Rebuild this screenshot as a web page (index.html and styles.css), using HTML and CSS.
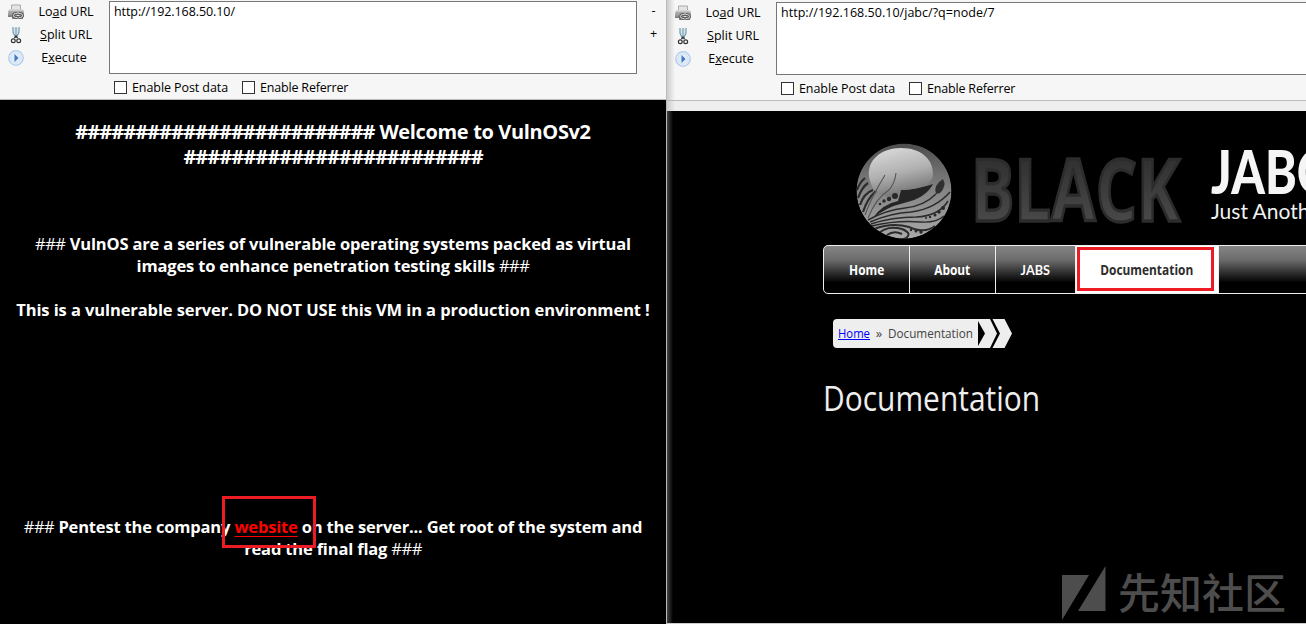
FILE: index.html
```
<!DOCTYPE html>
<html lang="en">
<head>
<meta charset="utf-8">
<title>VulnOSv2</title>
<link rel="stylesheet" href="styles.css">
</head>
<body>
<svg class="defs" width="0" height="0">
  <defs>
    <linearGradient id="print" x1="0" y1="0" x2="0" y2="1"><stop offset="0" stop-color="#ddd"/><stop offset="1" stop-color="#777"/></linearGradient>
    <symbol id="i-load" viewBox="0 0 16 16">
      <path d="M3.500 1h9v5h-9z" fill="#e4e4e4" stroke="#aaa"/>
      <path d="M1.500 5h13l1.500 2v6H0V7z" fill="url(#print)"/>
      <path d="M1 8h14" stroke="#999"/>
      <path d="M4 11.500h11v3.500H4z" fill="#888"/>
      <path d="M9 9.500H7.500a2 2 0 0 0 0 4H9M11 9.500h1.500a2 2 0 0 1 0 4H11M8.500 11.500h3" fill="none" stroke="#555" stroke-width="2.400"/>
      <path d="M9 9.500H7.500a2 2 0 0 0 0 4H9M11 9.500h1.500a2 2 0 0 1 0 4H11M8.500 11.500h3" fill="none" stroke="#ddd" stroke-width="1"/>
    </symbol>
    <symbol id="i-split" viewBox="0 0 12 18">
      <path d="M3 1v5l2.500 5.500M9 1v5l-2.500 5.500M6 1v9" fill="none" stroke="#6c9aae" stroke-width="1.200"/>
      <path d="M4.500 2v5M7.500 2v5" stroke="#cfe0e6"/>
      <path d="M4.500 12 6 10l1.500 2" fill="none" stroke="#333" stroke-width="1.300"/>
      <circle cx="3.300" cy="14.700" r="1.900" fill="none" stroke="#333" stroke-width="1.200"/>
      <circle cx="8.700" cy="14.700" r="1.900" fill="none" stroke="#333" stroke-width="1.200"/>
    </symbol>
    <symbol id="i-run" viewBox="0 0 16 16">
      <circle cx="8" cy="8" r="7.200" fill="#f4f8fd" stroke="#b5cfec" stroke-width="1.500"/>
      <circle cx="8" cy="8" r="5.300" fill="#e2ecf8" stroke="#d0e0f2"/>
      <path d="M6.500 4 10.500 8l-4 4z" fill="#3d78c0"/>
    </symbol>
  </defs>
</svg>

<section class="pane left">
  <header class="toolbar">
    <div class="actions">
      <svg class="ic"><use href="#i-load"/></svg><span>Lo<u>a</u>d URL</span>
      <svg class="ic cut"><use href="#i-split"/></svg><span><u>S</u>plit URL</span>
      <svg class="ic"><use href="#i-run"/></svg><span class="exec">E<u>x</u>ecute</span>
    </div>
    <div class="entry">
      <div class="url">http://192.168.50.10/</div>
      <div class="checks"><i class="box"></i><span class="post">Enable Post data</span><i class="box"></i><span class="ref">Enable Referrer</span></div>
    </div>
    <div class="size"><span>-</span><span>+</span></div>
  </header>
  <main class="vuln">
    <h1><span class="hashes">#########################</span> Welcome to VulnOSv2<br><span class="hashes">#########################</span></h1>
    <p class="p1"><em>###</em> VulnOS are a series of vulnerable operating systems packed as virtual<br>images to enhance penetration testing skills <em>###</em></p>
    <p class="p2">This is a vulnerable server. DO NOT USE this VM in a production environment !</p>
    <p class="p3"><em>###</em> Pentest the company <a>website</a> on the server... Get root of the system and<br>read the final flag <em>###</em></p>
    <div class="mark"></div>
  </main>
</section>

<section class="pane right">
  <header class="toolbar">
    <div class="actions">
      <svg class="ic"><use href="#i-load"/></svg><span>Lo<u>a</u>d URL</span>
      <svg class="ic cut"><use href="#i-split"/></svg><span><u>S</u>plit URL</span>
      <svg class="ic"><use href="#i-run"/></svg><span class="exec">E<u>x</u>ecute</span>
    </div>
    <div class="entry">
      <div class="url wide">http://192.168.50.10/jabc/?q=node/7</div>
      <div class="checks"><i class="box"></i><span class="post">Enable Post data</span><i class="box"></i><span class="ref">Enable Referrer</span></div>
    </div>
  </header>
  <div class="strip"></div>
  <main class="jabc">
    <div class="brand">
      <svg class="orb" viewBox="0 0 96 96">
        <defs>
          <linearGradient id="ball" x1="0" y1="0" x2="0" y2="1"><stop offset="0" stop-color="#4c4c4c"/><stop offset=".5" stop-color="#858585"/><stop offset="1" stop-color="#a8a8a8"/></linearGradient>
          <linearGradient id="shine" x1=".3" y1="0" x2=".6" y2="1"><stop offset="0" stop-color="#d8d8d8"/><stop offset=".5" stop-color="#b0b0b0"/><stop offset="1" stop-color="#6a6a6a"/></linearGradient>
          <clipPath id="round"><circle cx="48" cy="48" r="47.500"/></clipPath>
        </defs>
        <g clip-path="url(#round)">
          <circle cx="48" cy="48" r="47.500" fill="url(#ball)"/>
          <path d="M42 58 45 47Q63 46 77 41 70 55 48 60 30 64 16 76 26 61 42 58Z" fill="#252525"/>
          <path d="M13 34C11 17 25 5 45 5S77 16 77 31C77 42 63 47 44 47L41 55Q28 55 18 47 14 41 13 34Z" fill="url(#shine)"/>
          <g fill="none" stroke="#2b2b2b">
            <path d="M1 47Q4 39 9 35M2 55Q6 44 12 40M4 62Q8 50 17 47M7 69Q11 56 20 48" stroke-width="2.200"/>
            <path d="M9 72Q15 55 29 32M12 75Q20 55 33 47 39 40 40 30" stroke-width="1.100" stroke="#555"/>
            <path d="M12 77Q30 67 49 65T80 51M14 79Q35 70 55 69 79 66 94 49M15 81Q36 74 60 74 83 73 92 58M16 83Q40 77 65 79 80 80 88 73" stroke-width="1.500"/>
            <path d="M18 86Q36 79 53 84 69 91 79 83M22 91Q31 82 46 86 58 91 48 96M31 92Q38 87 46 91" stroke-width="2"/>
          </g>
          <path d="M80 51Q77 42 87 36 91 43 84 50Z" fill="#303030"/>
          <g fill="#282828"><circle cx="39" cy="53" r="3"/><circle cx="33" cy="56" r="2.200"/><circle cx="28" cy="58" r="1.700"/><circle cx="24" cy="61" r="1.300"/><circle cx="87" cy="65" r="2"/><circle cx="83" cy="69" r="1.700"/><circle cx="79" cy="72" r="1.500"/><circle cx="74" cy="74" r="1.200"/><circle cx="70" cy="75" r="1"/><circle cx="65" cy="89" r="1.700"/><circle cx="60" cy="88" r="1.500"/><circle cx="55" cy="87" r="1.200"/></g>
        </g>
      </svg>
      <svg class="black" viewBox="0 0 216 80">
        <defs><linearGradient id="bk" x1="0" y1="0" x2="0" y2="1"><stop offset=".2" stop-color="#2e2e2e"/><stop offset=".85" stop-color="#4b4b4b"/></linearGradient></defs>
        <g transform="translate(1 70) scale(1 1.100)">
          <text class="bk" x="0" y="0" textLength="209" lengthAdjust="spacingAndGlyphs">BLACK</text>
        </g>
      </svg>
      <div class="site"><div class="name">JABC</div><div class="slogan">Just Another</div></div>
    </div>
    <nav class="menu">
      <a><span>Home</span></a><a><span>About</span></a><a><span class="jabs">JABS</span></a><a class="on"><span>Documentation</span></a>
    </nav>
    <div class="crumbs">
      <div class="trail"><a>Home</a><span class="sep">»</span><span class="here">Documentation</span></div>
      <svg width="34" height="29" viewBox="0 0 34 29"><path d="M0 0h12l7 14.500-7 14.500H0V27L7 14.500 0 2z" fill="#eee"/><path d="M14.500 0h12l7.500 14.500-7.500 14.500h-12l7.500-14.500z" fill="#eee"/></svg>
    </div>
    <h2>Documentation</h2>
    <div class="watermark">
      <svg width="44" height="54" viewBox="0 0 44 54"><path d="M0 9h27L0 54zM43.500 0v45H16z" fill="#4d4d4d"/></svg>
      <span>先知社区</span>
    </div>
  </main>
</section>
</body>
</html>
```
FILE: styles.css
```
*, *::after { box-sizing: border-box; }
body { margin: 0; width: 1306px; height: 624px; display: flex; overflow: hidden; background: #000; font-family: "Open Sans", "Noto Sans", sans-serif; color: #fff; }
.defs { position: absolute; }
.pane { display: flex; flex-direction: column; height: 624px; white-space: nowrap; }
.left { width: 667px; flex: none; border-right: 1px solid #bbb; }
.right { width: 639px; flex: none; overflow: hidden; border-bottom: 1px solid #ccc; }

.toolbar { height: 100px; flex: none; display: flex; background: #f6f6f6; border-bottom: 1px solid #bbb; color: #000; font-size: 12.5px; line-height: 18px; padding-top: 1px; }
.right .toolbar { height: 101px; padding-top: 2px; background: linear-gradient(90deg, #ccc, #f6f6f6 8px); }
.actions { width: 109px; flex: none; display: grid; grid-template-columns: 32px 68px; grid-template-rows: 21px 25px 22px; align-items: center; justify-items: center; height: 70px; }
.exec { padding-right: 4px; }
.ic { width: 16px; height: 16px; }
.ic.cut { width: 12px; height: 18px; }
.entry { width: 528px; flex: none; }
.right .entry { width: 540px; }
.url { height: 73px; border: 1px solid #777; background: #fff; padding: 1px 4px; letter-spacing: -0.08px; }
.url.wide { letter-spacing: 0.03px; }
.checks { display: flex; align-items: center; padding: 3px 0 0 5px; height: 24px; }
.box { width: 13px; height: 13px; border: 1px solid #333; background: #fff; margin-right: 5px; }
.post { width: 96px; margin-right: 14px; letter-spacing: -0.08px; }
.ref { letter-spacing: -0.18px; }
.size { width: 34px; display: flex; flex-direction: column; align-items: center; gap: 5px; padding: 1px 0 0 4px; }

.vuln { flex: 1; position: relative; text-align: center; font-weight: 700; padding-top: 19px; }
.vuln h1 { margin: 0; font-size: 20px; line-height: 25px; letter-spacing: -0.35px; }
.hashes { letter-spacing: -0.95px; }
.vuln p { margin: 0; font-size: 16.5px; line-height: 22px; letter-spacing: -0.17px; }
.vuln em { font-style: normal; font-weight: 400; letter-spacing: -0.5px; }
.vuln .p1 { margin-top: 64px; }
.vuln .p2 { margin-top: 22px; letter-spacing: -0.1px; }
.vuln .p3 { margin-top: 195px; }
.vuln a { color: #f00; text-decoration: underline; text-underline-offset: 3px; }
.mark { position: absolute; border: 3px solid #ed1c24; left: 222px; top: 396px; width: 94px; height: 52px; }

.strip { height: 10px; flex: none; background: linear-gradient(90deg, #ccc, #eee 8px); }
.jabc { flex: 1; position: relative; padding-left: 156px; background: linear-gradient(90deg, #444, #000 6px); }
.brand { display: flex; height: 134px; padding: 32px 0 0 33px; }
.orb { width: 96px; height: 96px; flex: none; }
.black { width: 216px; height: 80px; flex: none; margin: 8px 0 0 18px; }
.bk { font-family: "Open Sans", sans-serif; font-weight: 700; font-size: 79px; fill: url(#bk); stroke: #2c2c2c; stroke-width: 3px; }
.site { margin: -2px 0 0 25px; }
.name { font-family: Lato, sans-serif; font-size: 60px; font-weight: 900; line-height: 60px; color: #f5f5f5; transform: scaleX(.8); transform-origin: left; }
.slogan { font-family: Lato, sans-serif; font-size: 21px; line-height: 24px; color: #f0f0f0; margin-top: -2px; }
.menu { display: flex; width: 520px; height: 49px; border: 1px solid #eee; border-radius: 5px 0 0 5px; background: linear-gradient(#858585, #6b6b6b 30%, #333 55%, #000 78%); font-size: 14px; font-weight: 700; }
.menu a { width: 86px; flex: none; border-right: 1px solid #eee; display: flex; align-items: center; justify-content: center; }
.menu span { transform: scaleX(.85); }
.menu .jabs { font-family: Lato, sans-serif; transform: scaleX(.9); }
.menu a:nth-child(3) { width: 80px; }
.menu a.on { width: 143px; background: #fff; color: #2d2d2d; position: relative; }
.on::after { content: ""; position: absolute; left: 1px; top: 1px; width: 137px; height: 44px; border: 3px solid #ed1c24; }
.crumbs { display: flex; margin: 25px 0 0 10px; font-size: 13px; line-height: 29px; color: #444; }
.trail { width: 145px; height: 29px; background: #eee; border-radius: 4px 0 0 4px; padding-left: 5px; display: flex; }
.trail > * { flex: none; }
.trail a { color: #00f; text-decoration: underline; width: 32px; transform: scaleX(.87); transform-origin: left; }
.sep { width: 18px; text-align: center; }
.here { width: 90px; transform: scaleX(.9); transform-origin: left; }
h2 { margin: 27px 0 0; font-weight: 400; font-size: 34px; line-height: 46px; color: #eee; transform: scaleX(.88); transform-origin: left; }
.watermark { position: absolute; left: 395px; top: 455px; display: flex; color: #4d4d4d; font: 500 42px/50px "Noto Sans CJK SC", sans-serif; gap: 12px; }
```
